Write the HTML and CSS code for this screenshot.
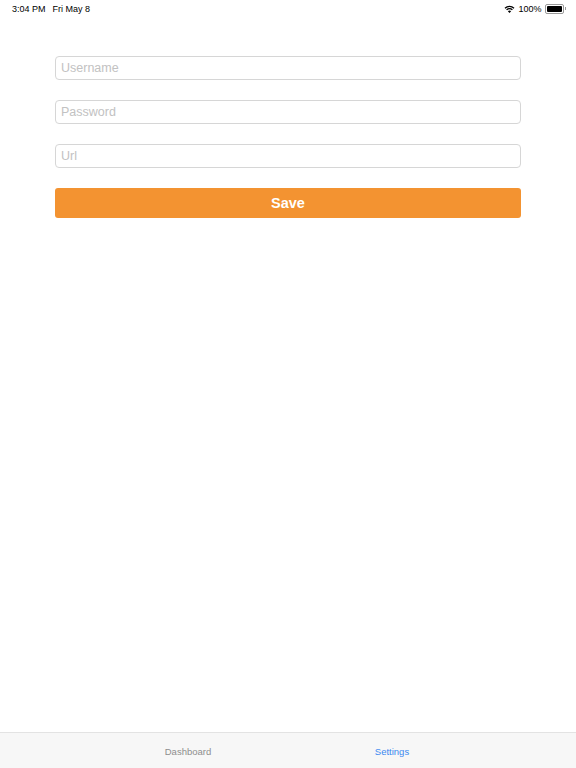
FILE: index.html
```html
<!DOCTYPE html>
<html>
<head>
<meta charset="utf-8">
<link rel="stylesheet" href="styles.css">
</head>
<body>
<div class="app">
  <div class="status">
    <div class="status-left"><span>3:04 PM</span><span>Fri May 8</span></div>
    <div class="status-right">
      <svg class="wifi" width="11" height="8" viewBox="0 0 11 8"><path d="M5.5 8 L3.9 6.3 A2.3 2.3 0 0 1 7.1 6.3 Z" fill="#000"/><path d="M2.6 4.9 A4.2 4.2 0 0 1 8.4 4.9" stroke="#000" stroke-width="1.3" fill="none"/><path d="M1 3.2 A6.5 6.5 0 0 1 10 3.2" stroke="#000" stroke-width="1.3" fill="none"/></svg>
      <span class="pct">100%</span>
      <span class="battery"><span class="fill"></span></span><span class="nub"></span>
    </div>
  </div>
  <main class="form">
    <div class="field">Username</div>
    <div class="field">Password</div>
    <div class="field">Url</div>
    <button class="save">Save</button>
  </main>
  <nav class="tabs">
    <div class="tab">Dashboard</div>
    <div class="tab active">Settings</div>
  </nav>
</div>
</body>
</html>
```
FILE: styles.css
```css
html, body { margin: 0; padding: 0; }
body { font-family: "Liberation Sans", Arial, sans-serif; background: #fff; }
.app { width: 576px; height: 768px; display: flex; flex-direction: column; }
.status { height: 17px; display: flex; justify-content: space-between; align-items: center; padding: 0 10px 0 12px; font-size: 9px; color: #000; }
.status-left { display: flex; gap: 7px; }
.status-right { display: flex; align-items: center; }
.wifi { margin-right: 3px; }
.pct { margin-right: 3px; }
.battery { width: 15px; height: 6px; border: 1px solid #999; border-radius: 2px; padding: 1px; display: flex; }
.battery .fill { flex: 1; background: #000; border-radius: 1px; }
.nub { width: 1.5px; height: 3px; background: #999; margin-left: 1px; }
.form { flex: 1; padding: 39px 55px 0 55px; display: flex; flex-direction: column; gap: 20px; }
.field { height: 22px; border: 1px solid #d6d6d6; border-radius: 4px; padding: 0 5px; font-size: 12.5px; line-height: 22px; color: #c2c2c2; }
.save { height: 30px; border: none; border-radius: 3px; background: #f39331; color: #fff; font-family: "Liberation Sans", Arial, sans-serif; font-weight: bold; font-size: 14.5px; padding: 0; }
.tabs { height: 35px; border-top: 1px solid #e3e3e3; background: #f7f7f7; display: flex; justify-content: center; padding-left: 4px; }
.tab { width: 204px; text-align: center; font-size: 9.5px; color: #8e8e8e; padding-top: 13px; }
.tab.active { color: #3b89f0; }
```
